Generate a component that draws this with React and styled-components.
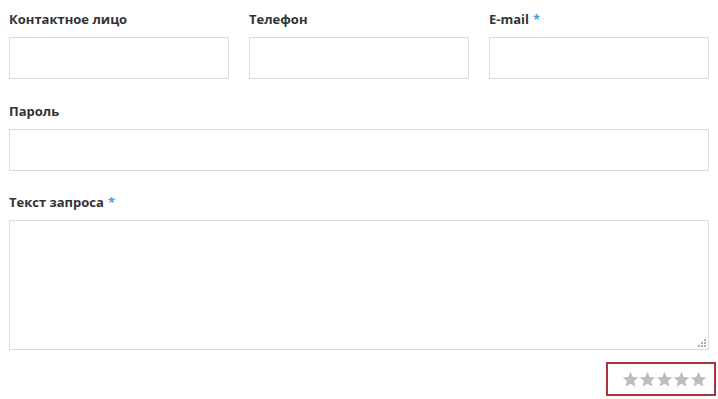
import React from "react";
import styled, { createGlobalStyle } from "styled-components";

const GlobalStyle = createGlobalStyle`
  body {
    margin: 0;
    background: #fff;
    font-family: "Open Sans", "Liberation Sans", sans-serif;
  }
`;

const Form = styled.form`
  width: 700px;
  padding: 8px 0 0 9px;
  display: flex;
  flex-direction: column;
`;

const Row = styled.div`
  display: grid;
  grid-template-columns: ${(p) => (p.cols ? `repeat(${p.cols}, 1fr)` : "1fr")};
  column-gap: 20px;
  margin-bottom: ${(p) => p.gap ?? 21}px;
`;

const Field = styled.div`
  display: flex;
  flex-direction: column;
`;

const Label = styled.label`
  font-size: 13px;
  line-height: 20px;
  font-weight: 700;
  color: #333;
  margin-bottom: 9px;
  padding-top: 1px;
  height: 19px;
`;

const Req = styled.span`
  color: #4a9ed8;
  margin-left: 4px;
`;

const Input = styled.input`
  box-sizing: border-box;
  height: 42px;
  width: 100%;
  border: 1px solid #dcdcdc;
  background: #fff;
  outline: none;
  padding: 0 10px;
  font: inherit;
`;

const AreaWrap = styled.div`
  position: relative;
`;

const TextArea = styled.textarea`
  display: block;
  box-sizing: border-box;
  width: 100%;
  height: 130px;
  border: 1px solid #dcdcdc;
  resize: none;
  outline: none;
  padding: 8px 10px;
  font: inherit;
`;

const Grip = styled.svg`
  position: absolute;
  right: 3px;
  bottom: 3px;
`;

const RatingRow = styled.div`
  display: flex;
  justify-content: flex-end;
  margin-top: 12px;
  margin-right: -7px;
`;

const Rating = styled.div`
  box-sizing: border-box;
  width: 110px;
  height: 34px;
  border: 2px solid #a9343b;
  display: flex;
  align-items: center;
  justify-content: flex-end;
  padding-right: 7px;
`;

const Star = styled.svg`
  width: 17px;
  height: 17px;
  fill: #bdbdbd;
`;

const StarIcon = () => (
  <Star viewBox="0 0 24 24">
    <path d="M12 1.2l3.2 7.1 7.8.7-5.9 5.2 1.8 7.7L12 17.9l-6.9 4 1.8-7.7L1 9l7.8-.7z" />
  </Star>
);

const App = () => (
  <>
    <GlobalStyle />
    <Form>
      <Row cols={3}>
        <Field>
          <Label>Контактное лицо</Label>
          <Input type="text" />
        </Field>
        <Field>
          <Label>Телефон</Label>
          <Input type="text" />
        </Field>
        <Field>
          <Label>
            E-mail<Req>*</Req>
          </Label>
          <Input type="text" />
        </Field>
      </Row>
      <Row gap={20}>
        <Field>
          <Label>Пароль</Label>
          <Input type="password" />
        </Field>
      </Row>
      <Row gap={0}>
        <Field>
          <Label>
            Текст запроса<Req>*</Req>
          </Label>
          <AreaWrap>
            <TextArea />
            <Grip width="8" height="8" viewBox="0 0 8 8" fill="#aaa">
              <rect x="6" y="0" width="2" height="2" />
              <rect x="3" y="3" width="2" height="2" />
              <rect x="6" y="3" width="2" height="2" />
              <rect x="0" y="6" width="2" height="2" />
              <rect x="3" y="6" width="2" height="2" />
              <rect x="6" y="6" width="2" height="2" />
            </Grip>
          </AreaWrap>
        </Field>
      </Row>
      <RatingRow>
        <Rating>
          {[0, 1, 2, 3, 4].map((i) => (
            <StarIcon key={i} />
          ))}
        </Rating>
      </RatingRow>
    </Form>
  </>
);

export default App;
